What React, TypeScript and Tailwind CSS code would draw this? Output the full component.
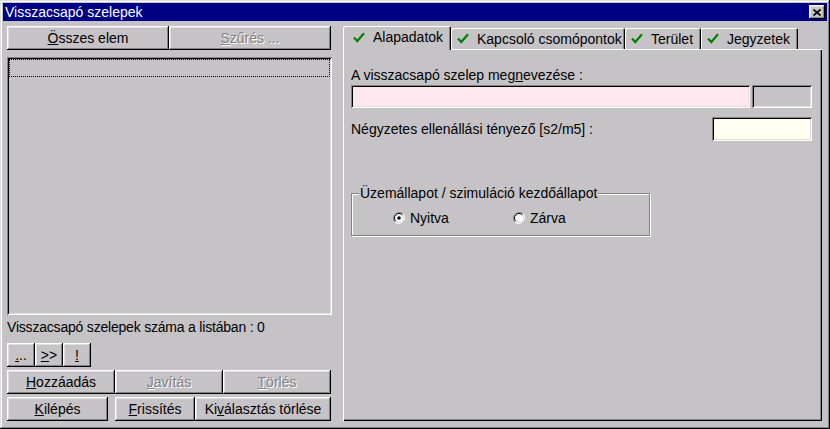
import React from "react";

const raised =
  "bg-[#c6c3c6] shadow-[inset_-1px_-1px_#000,inset_1px_1px_#fff,inset_-2px_-2px_#848284,inset_2px_2px_#dedfde]";
const sunken =
  "shadow-[inset_1px_1px_#848284,inset_-1px_-1px_#fff,inset_2px_2px_#000,inset_-2px_-2px_#dedfde]";
const disabledText = "text-[#848284] [text-shadow:1px_1px_#fff]";

function Btn({
  children,
  disabled,
  className = "",
}: {
  children: React.ReactNode;
  disabled?: boolean;
  className?: string;
}) {
  return (
    <div
      className={`h-[24px] flex items-center justify-center ${raised} ${
        disabled ? disabledText : "text-black"
      } ${className}`}
    >
      <span className="leading-[16px]">{children}</span>
    </div>
  );
}

function Check() {
  return (
    <svg width="12" height="11" viewBox="0 0 12 11" className="shrink-0">
      <path d="M1 5.5 L4.3 9 L11 1.2" fill="none" stroke="#008200" strokeWidth="2.2" />
    </svg>
  );
}

function Tab({
  label,
  active,
  width,
}: {
  label: string;
  active?: boolean;
  width: string;
}) {
  return (
    <div
      className={`${width} flex items-center gap-[8px] bg-[#c6c3c6] rounded-t-[2px] shadow-[inset_1px_1px_#fff,inset_-1px_0_#000,inset_-2px_0_#848284] ${
        active ? "h-[24px] mb-[-1px] relative z-10 pl-[10px] pb-[2px]" : "h-[21px] pl-[6px]"
      }`}
    >
      <Check />
      <span className="leading-[16px] whitespace-nowrap">{label}</span>
    </div>
  );
}

function Radio({ checked, label }: { checked?: boolean; label: string }) {
  return (
    <div className="flex items-center gap-[5px]">
      <svg width="12" height="12" viewBox="0 0 12 12">
        <path d="M10.2 1.8 A6 6 0 0 0 1.8 10.2" fill="none" stroke="#848284" strokeWidth="1" />
        <path d="M1.8 10.2 A6 6 0 0 0 10.2 1.8" fill="none" stroke="#fff" strokeWidth="1" />
        <circle cx="6" cy="6" r="4.5" fill="#fff" />
        <path d="M9.2 2.8 A4.5 4.5 0 0 0 2.8 9.2" fill="none" stroke="#000" strokeWidth="1" />
        <path d="M2.8 9.2 A4.5 4.5 0 0 0 9.2 2.8" fill="none" stroke="#dedfde" strokeWidth="1" />
        {checked && <circle cx="6" cy="6" r="1.8" fill="#000" />}
      </svg>
      <span className="leading-[16px]">{label}</span>
    </div>
  );
}

export default function App() {
  return (
    <div
      className="w-[830px] h-[429px] bg-[#c6c3c6] p-[3px] flex flex-col text-[14px] text-black shadow-[inset_-1px_-1px_#000,inset_1px_1px_#dedfde,inset_-2px_-2px_#848284,inset_2px_2px_#fff]"
      style={{ fontFamily: '"Liberation Sans", Arial, sans-serif' }}
    >
      {/* Title bar */}
      <div className="h-[18px] bg-[#000084] flex items-center justify-between pl-[2px] pr-[2px]">
        <span className="text-white leading-[16px]">Visszacsapó szelepek</span>
        <div className={`w-[16px] h-[14px] flex items-center justify-center ${raised}`}>
          <svg width="8" height="7" viewBox="0 0 8 7">
            <path d="M0.5 0.5 L7.5 6.5 M7.5 0.5 L0.5 6.5" stroke="#000" strokeWidth="1.6" />
          </svg>
        </div>
      </div>

      {/* Body */}
      <div className="flex pt-[5px] pl-[4px] gap-[12px]">
        {/* Left column */}
        <div className="w-[324px] flex flex-col">
          <div className="flex">
            <Btn className="w-[162px]">
              <u>Ö</u>sszes elem
            </Btn>
            <Btn className="w-[162px]" disabled>
              <u>S</u>zűrés ...
            </Btn>
          </div>
          <div className={`mt-[7px] h-[258px] w-[325px] p-[2px] ${sunken}`}>
            <div className="h-[18px] border border-dotted border-black" />
          </div>
          <div className="h-[28px] pt-[4px] leading-[16px] tracking-[-0.2px]">
            Visszacsapó szelepek száma a listában : 0
          </div>
          <div className="flex">
            <Btn className="w-[28px]">
              <u>.</u>..
            </Btn>
            <Btn className="w-[28px]">
              <u>&gt;</u>&gt;
            </Btn>
            <Btn className="w-[28px]">
              <u>!</u>
            </Btn>
          </div>
          <div className="flex mt-[3px]">
            <Btn className="w-[108px]">
              <u>H</u>ozzáadás
            </Btn>
            <Btn className="w-[108px]" disabled>
              <u>J</u>avítás
            </Btn>
            <Btn className="w-[108px]" disabled>
              <u>T</u>örlés
            </Btn>
          </div>
          <div className="flex mt-[3px]">
            <Btn className="w-[101px]">
              <u>K</u>ilépés
            </Btn>
            <Btn className="w-[80px] ml-[7px]">
              <u>F</u>rissítés
            </Btn>
            <Btn className="w-[136px]">
              Ki<u>v</u>álasztás törlése
            </Btn>
          </div>
        </div>

        {/* Right column */}
        <div className="w-[479px] flex flex-col">
          <div className="flex items-end h-[23px]">
            <Tab label="Alapadatok" active width="w-[108px]" />
            <Tab label="Kapcsoló csomópontok" width="w-[174px]" />
            <Tab label="Terület" width="w-[76px]" />
            <Tab label="Jegyzetek" width="w-[97px]" />
          </div>
          <div className="h-[372px] bg-[#c6c3c6] pl-[8px] pr-[10px] pt-[18px] shadow-[inset_1px_1px_#fff,inset_-1px_-1px_#000,inset_-2px_-2px_#848284]">
            <div className="leading-[16px]">
              A visszacsapó szelep meg<u>n</u>evezése :
            </div>
            <div className="flex gap-[2px] mt-[2px]">
              <div className={`flex-1 h-[23px] bg-[#ffe7ef] ${sunken}`} />
              <div className={`w-[60px] h-[23px] bg-[#c6c3c6] ${sunken}`} />
            </div>
            <div className="flex items-center justify-between mt-[9px]">
              <span className="leading-[16px]">Négyzetes ellenállási tényező [s2/m5] :</span>
              <div className={`w-[100px] h-[24px] bg-[#ffffef] ${sunken}`} />
            </div>
            <div className="mt-[44px] pt-[8px] w-[299px] relative">
              <div className="absolute left-[8px] top-0 px-[1px] bg-[#c6c3c6] leading-[16px] z-10">
                Üzemállapot / szimuláció kezdőállapot
              </div>
              <div className="h-[43px] border border-[#848284] shadow-[1px_1px_#fff,inset_1px_1px_#fff] flex items-center pl-[41px] pt-[6px]">
                <div className="w-[120px]">
                  <Radio checked label="Nyitva" />
                </div>
                <Radio label="Zárva" />
              </div>
            </div>
          </div>
        </div>
      </div>
    </div>
  );
}
